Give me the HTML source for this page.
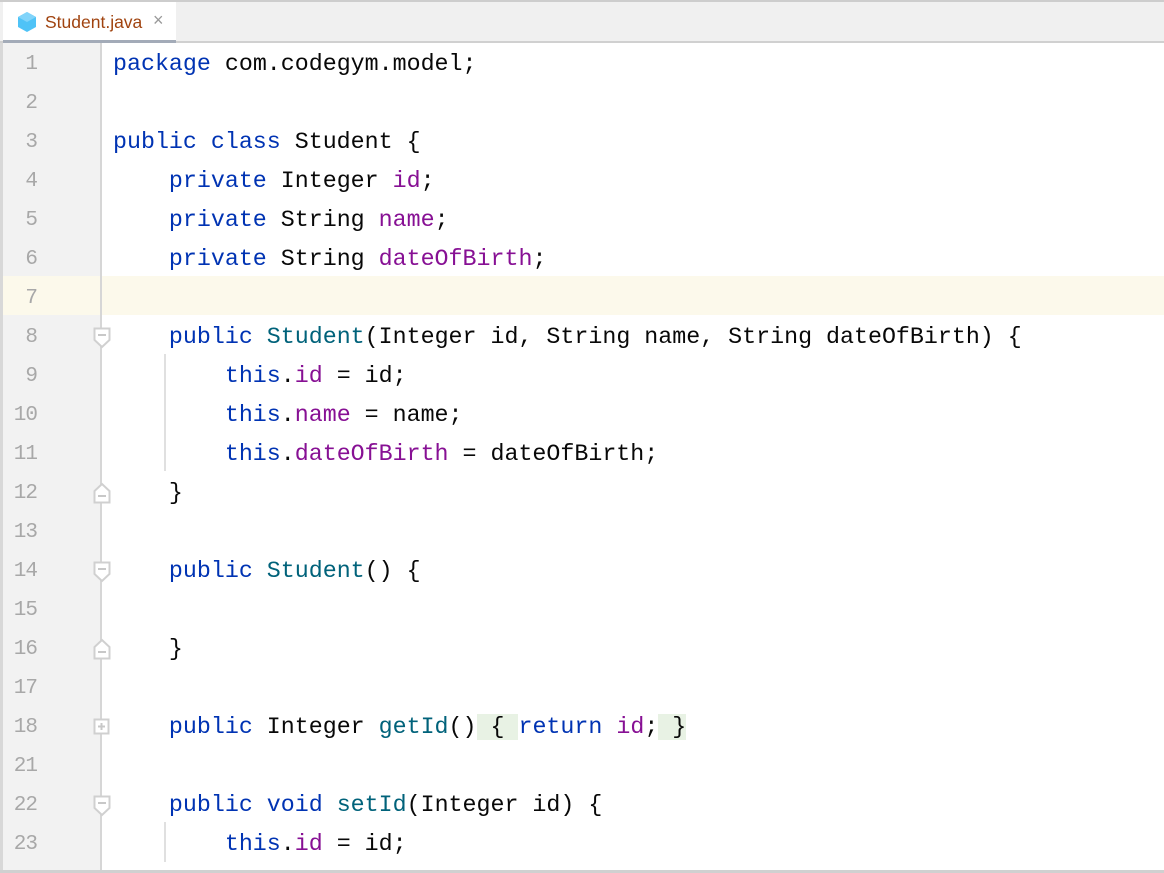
<!DOCTYPE html>
<html><head><meta charset="utf-8"><style>
html,body{margin:0;padding:0;width:1164px;height:873px;overflow:hidden;background:#fff;position:relative}
.top{position:absolute;left:0;top:0;width:1164px;height:2px;background:#cdcdcd}
.bar{position:absolute;left:0;top:2px;width:1164px;height:39px;background:#f0f0f0}
.barb{position:absolute;left:0;top:41px;width:1164px;height:2px;background:#d0d0d0}
.tab{position:absolute;left:3px;top:2px;width:173px;height:38px;background:#fff;border-bottom:3px solid #a3abb8;box-sizing:content-box}
.tab .t{position:absolute;left:42px;top:10px;font:17.5px "Liberation Sans",sans-serif;color:#a0430f}
.tab .x{position:absolute;left:150px;top:8px;font:18px "Liberation Sans",sans-serif;color:#999}
.lb{position:absolute;left:0;top:43px;width:3px;height:830px;background:#d8d8d8}
.gut{position:absolute;left:3px;top:43px;width:97px;height:827px;background:#f2f2f2}
.gl{position:absolute;left:100px;top:43px;width:2px;height:827px;background:#d6d6d6}
.hl{position:absolute;left:3px;top:276px;width:1161px;height:39px;background:#fcf9eb}
.bot{position:absolute;left:0;top:870px;width:1164px;height:3px;background:#d0d0d0;z-index:5}
.n{position:absolute;left:0;width:37px;text-align:right;font:21px "Liberation Mono",monospace;color:#a8a8a8;height:39px;line-height:39px;letter-spacing:-1px;margin-top:2px}
.c{position:absolute;left:113px;font:23.3px "Liberation Mono",monospace;color:#080808;white-space:pre;height:39px;line-height:39px;margin-top:2px}
.k{color:#0033b3}.f{color:#871094}.m{color:#00627a}
.g{position:absolute;left:164px;width:2px;background:#e0e0e0}
.br{background:#e8f2e4}
svg{position:absolute}
</style></head><body>
<div class="top"></div><div class="bar"></div><div class="barb"></div>
<div class="tab">
<svg style="left:14px;top:9px" width="20" height="22" viewBox="0 0 20 22"><polygon points="10,1 19,6 19,16 10,21 1,16 1,6" fill="#4fc3f7"/><polygon points="10,1 19,6 10,11 1,6" fill="#81d4fa"/></svg>
<span class="t">Student.java</span><span class="x">×</span></div>
<div class="lb"></div><div class="gut"></div><div class="hl"></div><div class="gl"></div><div class="bot"></div>

<div class="n" style="top:43px">1</div>
<div class="n" style="top:82px">2</div>
<div class="n" style="top:121px">3</div>
<div class="n" style="top:160px">4</div>
<div class="n" style="top:199px">5</div>
<div class="n" style="top:238px">6</div>
<div class="n" style="top:277px">7</div>
<div class="n" style="top:316px">8</div>
<div class="n" style="top:355px">9</div>
<div class="n" style="top:394px">10</div>
<div class="n" style="top:433px">11</div>
<div class="n" style="top:472px">12</div>
<div class="n" style="top:511px">13</div>
<div class="n" style="top:550px">14</div>
<div class="n" style="top:589px">15</div>
<div class="n" style="top:628px">16</div>
<div class="n" style="top:667px">17</div>
<div class="n" style="top:706px">18</div>
<div class="n" style="top:745px">21</div>
<div class="n" style="top:784px">22</div>
<div class="n" style="top:823px">23</div>

<svg style="left:93px;top:327px" width="18" height="22"><path d="M1.5 1.5H16.5V13L9 20L1.5 13Z" fill="#fff" stroke="#d0d0d0" stroke-width="2"/><path d="M5 8H13" stroke="#c8c8c8" stroke-width="2"/></svg>
<svg style="left:93px;top:482px" width="18" height="22"><path d="M1.5 20.5H16.5V9L9 2L1.5 9Z" fill="#fff" stroke="#d0d0d0" stroke-width="2"/><path d="M5 14H13" stroke="#c8c8c8" stroke-width="2"/></svg>
<svg style="left:93px;top:561px" width="18" height="22"><path d="M1.5 1.5H16.5V13L9 20L1.5 13Z" fill="#fff" stroke="#d0d0d0" stroke-width="2"/><path d="M5 8H13" stroke="#c8c8c8" stroke-width="2"/></svg>
<svg style="left:93px;top:638px" width="18" height="22"><path d="M1.5 20.5H16.5V9L9 2L1.5 9Z" fill="#fff" stroke="#d0d0d0" stroke-width="2"/><path d="M5 14H13" stroke="#c8c8c8" stroke-width="2"/></svg>
<svg style="left:93px;top:718px" width="18" height="18"><rect x="1.5" y="1.5" width="14" height="14" fill="#fff" stroke="#d0d0d0" stroke-width="2"/><path d="M5 8.5H12M8.5 5V12" stroke="#c8c8c8" stroke-width="2"/></svg>
<svg style="left:93px;top:795px" width="18" height="22"><path d="M1.5 1.5H16.5V13L9 20L1.5 13Z" fill="#fff" stroke="#d0d0d0" stroke-width="2"/><path d="M5 8H13" stroke="#c8c8c8" stroke-width="2"/></svg>

<div class="g" style="top:354px;height:117px"></div>
<div class="g" style="top:822px;height:40px"></div>

<div class="c" style="top:43px"><span class="k">package</span> com.codegym.model;</div>
<div class="c" style="top:121px"><span class="k">public class</span> Student {</div>
<div class="c" style="top:160px">    <span class="k">private</span> Integer <span class="f">id</span>;</div>
<div class="c" style="top:199px">    <span class="k">private</span> String <span class="f">name</span>;</div>
<div class="c" style="top:238px">    <span class="k">private</span> String <span class="f">dateOfBirth</span>;</div>
<div class="c" style="top:316px">    <span class="k">public</span> <span class="m">Student</span>(Integer id, String name, String dateOfBirth) {</div>
<div class="c" style="top:355px">        <span class="k">this</span>.<span class="f">id</span> = id;</div>
<div class="c" style="top:394px">        <span class="k">this</span>.<span class="f">name</span> = name;</div>
<div class="c" style="top:433px">        <span class="k">this</span>.<span class="f">dateOfBirth</span> = dateOfBirth;</div>
<div class="c" style="top:472px">    }</div>
<div class="c" style="top:550px">    <span class="k">public</span> <span class="m">Student</span>() {</div>
<div class="c" style="top:628px">    }</div>
<div class="c" style="top:706px">    <span class="k">public</span> Integer <span class="m">getId</span>()<span class="br"> { </span><span class="k">return</span> <span class="f">id</span>;<span class="br"> }</span></div>
<div class="c" style="top:784px">    <span class="k">public void</span> <span class="m">setId</span>(Integer id) {</div>
<div class="c" style="top:823px">        <span class="k">this</span>.<span class="f">id</span> = id;</div>
</body></html>
